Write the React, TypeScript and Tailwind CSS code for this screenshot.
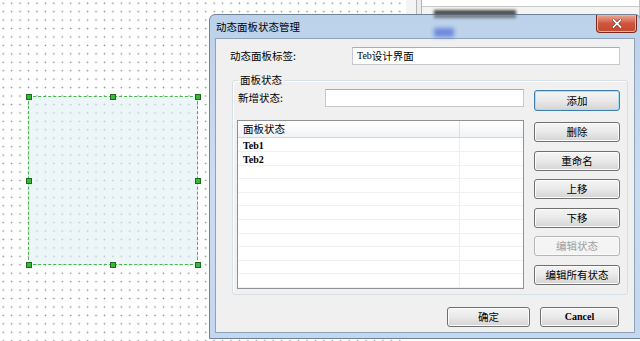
import React from "react";

const cjk = "font-['Noto_Sans_CJK_SC',sans-serif] text-[10.5px] leading-[12px]";
const latin = "font-['Liberation_Serif','Noto_Sans_CJK_SC',serif] font-bold text-[10px] leading-[12px]";

const rows = ["Teb1", "Teb2", "", "", "", "", "", "", "", "", ""];

function Btn({
  children,
  className = "",
  disabled = false,
  primary = false,
  latinText = false,
}: {
  children: React.ReactNode;
  className?: string;
  disabled?: boolean;
  primary?: boolean;
  latinText?: boolean;
}) {
  return (
    <div
      className={
        "flex items-center justify-center rounded-[3px] border bg-gradient-to-b from-[#f5f5f5] via-[#e9e9e9] to-[#d4d4d4] " +
        (primary
          ? "border-[#3c7fb1] shadow-[inset_0_0_0_1px_#a6dcf5] "
          : disabled
            ? "border-[#b5b5b5] from-[#f4f4f4] via-[#f4f4f4] to-[#f4f4f4] shadow-[inset_0_0_0_1px_#fafafa] "
            : "border-[#707070] shadow-[inset_0_0_0_1px_#fbfbfb] ") +
        (disabled ? "text-[#a0a0a0] " : "text-black ") +
        (latinText ? latin + " " : cjk + " ") +
        className
      }
    >
      {children}
    </div>
  );
}

function Handle({ x, y }: { x: number; y: number }) {
  return (
    <div
      className="absolute h-[6px] w-[6px] border border-[#1d6b1d] bg-[#36b936]"
      style={{ left: x - 3, top: y - 3 }}
    />
  );
}

export default function App() {
  return (
    <div className="relative h-[341px] w-[640px] overflow-hidden bg-white">
      {/* design canvas */}
      <div className="absolute left-0 top-0 h-[341px] w-[406px] bg-[radial-gradient(circle_at_center,#8a8a8a_0.6px,transparent_1.1px)] bg-[length:8.45px_8.45px] bg-[position:-1px_-1px]" />

      {/* selected dynamic panel */}
      <div className="absolute left-[28px] top-[96px] h-[169px] w-[170px] border border-dashed border-[#49b549] bg-[#dff0f4]/60" />
      <Handle x={29} y={97} />
      <Handle x={113} y={97} />
      <Handle x={198} y={97} />
      <Handle x={29} y={181} />
      <Handle x={198} y={181} />
      <Handle x={29} y={265} />
      <Handle x={113} y={265} />
      <Handle x={198} y={265} />

      {/* panel behind the dialog, top right */}
      <div className="absolute left-[406px] top-0 flex h-[16px] w-[234px] bg-[#f4f4f4]">
        <div className="w-[10px]" />
        <div className="w-[6px] border-x border-[#b4b4b4] bg-[#ececec]" />
        <div className="flex-1 border-r border-[#c4c4c4]">
          <div className="h-[7px] border-b border-[#c8c8c8] bg-white" />
          <div className="ml-[12px] mt-[3px] h-[5px] w-[82px] bg-[#4a4a4a] blur-[1.5px]" />
        </div>
      </div>

      {/* dialog window */}
      <div className="absolute left-[209px] top-[14px] flex h-[325px] w-[432px] flex-col rounded-t-[6px] border border-[#6f8298] bg-gradient-to-b from-[#bcd2ea] via-[#cadcf0] to-[#c3d7ee]">
        <div className="relative flex h-[23px] items-center pl-[6px]">
          <div className="absolute left-[224px] top-[-1px] h-[4px] w-[82px] bg-[#3a3a3a]/60 blur-[1.5px]" />
          <div className="absolute left-[224px] top-[13px] h-[9px] w-[20px] bg-[#4f6ad8]/70 blur-[2px]" />
          <span className={cjk + " relative text-black"}>动态面板状态管理</span>
          <div className="absolute right-[3px] top-[0px] flex h-[18px] w-[41px] items-center justify-center rounded-b-[4px] border border-t-0 border-[#7a2a1c] bg-gradient-to-b from-[#e9a898] via-[#d0553c] to-[#c14a2f] shadow-[inset_0_0_0_1px_#eeb1a3]">
            <svg width="10" height="9" viewBox="0 0 10 9">
              <path d="M1.5 1 L8.5 8 M8.5 1 L1.5 8" stroke="#6b2418" strokeWidth="3" strokeLinecap="square" />
              <path d="M1.5 1 L8.5 8 M8.5 1 L1.5 8" stroke="white" strokeWidth="1.8" strokeLinecap="square" />
            </svg>
          </div>
        </div>

        <div className="mx-[5px] mb-[5px] flex flex-1 flex-col border border-[#8ea3bb] bg-[#f0f0f0]">
          {/* label row */}
          <div className="mt-[8px] flex items-center pl-[14px]">
            <span className={cjk + " w-[122px] text-black"}>动态面板标签:</span>
            <div className={latin + " flex h-[18px] w-[268px] items-center border border-[#c5c8cc] border-t-[#abadb3] bg-white pl-[4px] font-normal text-black"}>
              Teb<span className="font-['Noto_Sans_CJK_SC',sans-serif] text-[10.5px] font-normal">设计界面</span>
            </div>
          </div>

          {/* group box */}
          <fieldset className="ml-[16px] mt-[9px] w-[396px] rounded-[3px] border border-[#d5dfe5] pb-[5px] pl-[4px] pr-[7px] shadow-[inset_1px_1px_0_#ffffff]">
            <legend className={cjk + " ml-[1px] px-[2px] text-black"}>面板状态</legend>
            <div className="mt-[3px] flex gap-[10px]">
              <div className="flex w-[287px] flex-col">
                <div className="flex items-center">
                  <span className={cjk + " w-[88px] pl-[1px] text-black"}>新增状态:</span>
                  <div className="h-[18px] w-[199px] border border-[#c5c8cc] border-t-[#abadb3] bg-white" />
                </div>
                <div className="mt-[13px] flex h-[169px] flex-col overflow-hidden border border-[#8f9194] bg-white">
                  <div className="flex h-[20px] border-b border-[#d5d5d5] bg-gradient-to-b from-white to-[#f1f3f5]">
                    <div className={cjk + " flex w-[222px] items-center border-r border-[#dde0e4] pl-[5px] text-black"}>面板状态</div>
                    <div className="flex-1" />
                  </div>
                  {rows.map((r, i) => (
                    <div key={i} className="flex h-[13.6px] shrink-0 border-b border-[#f0f0f0]">
                      <div className={latin + " w-[222px] border-r border-[#eeeeee] pl-[5px] pt-[2px] text-black"}>{r}</div>
                      <div className="flex-1" />
                    </div>
                  ))}
                </div>
              </div>
              <div className="flex w-[86px] flex-col">
                <Btn primary className="mt-[1px] h-[21px]">添加</Btn>
                <div className="mt-[11px] flex flex-col gap-[8.5px]">
                  <Btn className="h-[20px]">删除</Btn>
                  <Btn className="h-[20px]">重命名</Btn>
                  <Btn className="h-[20px]">上移</Btn>
                  <Btn className="h-[20px]">下移</Btn>
                  <Btn disabled className="h-[20px]">编辑状态</Btn>
                  <Btn className="h-[20px]">编辑所有状态</Btn>
                </div>
              </div>
            </div>
          </fieldset>

          {/* dialog buttons */}
          <div className="mt-[12px] flex justify-end gap-[10px] pr-[15px]">
            <Btn className="h-[20px] w-[83px]">确定</Btn>
            <Btn latinText className="h-[20px] w-[79px]">Cancel</Btn>
          </div>
        </div>
      </div>
    </div>
  );
}
